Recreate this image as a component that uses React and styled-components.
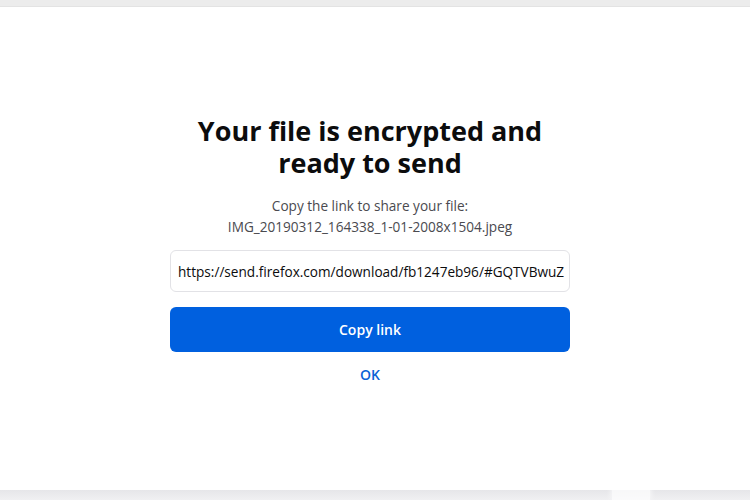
import React from 'react';
import styled, { createGlobalStyle } from 'styled-components';

const GlobalStyle = createGlobalStyle`
  html, body {
    margin: 0;
    padding: 0;
    background: #ffffff;
    font-family: "Open Sans", "Noto Sans", sans-serif;
  }
`;

const Page = styled.div`
  width: 750px;
  height: 500px;
  display: flex;
  flex-direction: column;
  position: relative;
  overflow: hidden;
`;

const TopBand = styled.div`
  height: 6px;
  background: #ececec;
  border-bottom: 1px solid #e3e3e3;
`;

const Main = styled.main`
  flex: 1;
  display: flex;
  justify-content: center;
  padding: 108px 10px 0 0;
`;

const BottomBand = styled.div`
  height: 10px;
  background: linear-gradient(#e6e6e9, #f0f0f2);
`;

const Ghost = styled.div`
  position: absolute;
  left: 612px;
  bottom: 0;
  width: 38px;
  height: 16px;
  border-radius: 4px 4px 0 0;
  background: rgba(255, 255, 255, 0.7);
  box-shadow: 0 0 6px rgba(255, 255, 255, 0.9);
`;

const Column = styled.section`
  width: 400px;
  display: flex;
  flex-direction: column;
  align-items: center;
`;

const Title = styled.h1`
  margin: 0;
  font-size: 27px;
  line-height: 32px;
  font-weight: 700;
  color: #0c0c0d;
  text-align: center;
  width: 360px;
`;

const Subtitle = styled.p`
  margin: 16px 0 0;
  font-size: 13.6px;
  line-height: 21px;
  color: #4a4a4f;
  text-align: center;
`;

const LinkField = styled.input`
  box-sizing: border-box;
  margin-top: 13px;
  width: 400px;
  height: 42px;
  padding: 0 0 0 7px;
  border: 1px solid #e2e2e6;
  border-radius: 6px;
  font-family: inherit;
  font-size: 13.6px;
  color: #0c0c0d;
  background: #fff;
  outline: none;
`;

const CopyButton = styled.button`
  margin-top: 15px;
  width: 400px;
  height: 45px;
  border: none;
  border-radius: 6px;
  background: #0060df;
  color: #fff;
  font-family: inherit;
  font-size: 14px;
  font-weight: 600;
  cursor: pointer;
`;

const OkLink = styled.a`
  margin-top: 13px;
  font-size: 14px;
  font-weight: 600;
  color: #0a63d6;
  text-decoration: none;
  cursor: pointer;
`;

export default function App() {
  return (
    <Page>
      <GlobalStyle />
      <TopBand />
      <Main>
        <Column>
          <Title>Your file is encrypted and ready to send</Title>
          <Subtitle>
            Copy the link to share your file:
            <br />
            IMG_20190312_164338_1-01-2008x1504.jpeg
          </Subtitle>
          <LinkField
            readOnly
            value="https://send.firefox.com/download/fb1247eb96/#GQTVBwuZ"
          />
          <CopyButton>Copy link</CopyButton>
          <OkLink>OK</OkLink>
        </Column>
      </Main>
      <BottomBand />
      <Ghost />
    </Page>
  );
}
